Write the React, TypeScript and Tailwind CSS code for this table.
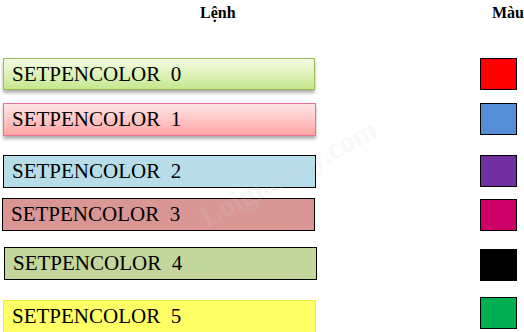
import React from "react";

type Row = {
  label: string;
  box: string;
  swatch: string;
  mt: string;
  swatchMt: string;
};

const rows: Row[] = [
  {
    label: "SETPENCOLOR  0",
    box: "ml-[3px] w-[312px] h-[32px] border border-[#9bbb59] bg-gradient-to-b from-[#f4fce3] to-[#c6e78c] shadow-[0_3px_3px_rgba(0,0,0,0.3)]",
    swatch: "bg-[#ff0000]",
    mt: "mt-[32px]",
    swatchMt: "mt-0",
  },
  {
    label: "SETPENCOLOR  1",
    box: "ml-[3px] w-[313px] h-[33px] border border-[#e8709a] bg-gradient-to-b from-[#ffe6e6] to-[#ffa6a6] shadow-[0_3px_3px_rgba(0,0,0,0.3)]",
    swatch: "bg-[#558ed5]",
    mt: "mt-[13px]",
    swatchMt: "mt-0",
  },
  {
    label: "SETPENCOLOR  2",
    box: "ml-[3px] w-[313px] h-[33px] border border-black bg-[#b7dee8]",
    swatch: "bg-[#7030a0]",
    mt: "mt-[19px]",
    swatchMt: "mt-0",
  },
  {
    label: "SETPENCOLOR  3",
    box: "ml-[2px] w-[313px] h-[33px] border border-black bg-[#d99694]",
    swatch: "bg-[#cc0066]",
    mt: "mt-[10px]",
    swatchMt: "mt-[1px]",
  },
  {
    label: "SETPENCOLOR  4",
    box: "ml-[4px] w-[313px] h-[33px] border border-black bg-[#c3d69b]",
    swatch: "bg-[#000000]",
    mt: "mt-[16px]",
    swatchMt: "mt-[2px]",
  },
  {
    label: "SETPENCOLOR  5",
    box: "ml-[3px] w-[313px] h-[33px] border border-[#f2ea3a] bg-[#ffff66]",
    swatch: "bg-[#00b050] mr-[-2px]",
    mt: "mt-[19px]",
    swatchMt: "mt-[-3px]",
  },
];

export default function App() {
  return (
    <div
      className="relative w-[524px] h-[332px] overflow-hidden bg-white text-black"
      style={{ fontFamily: '"Liberation Serif", "Times New Roman", serif' }}
    >
      {/* header */}
      <div className="flex h-[26px] items-center text-[16px] font-bold leading-none">
        <span className="ml-[200px]">Lệnh</span>
        <span className="ml-auto">Màu</span>
      </div>

      {rows.map((r) => (
        <div key={r.label} className={`flex items-start ${r.mt}`}>
          <div className={`flex items-center whitespace-pre pl-[8px] text-[21px] leading-none ${r.box}`}>
            {r.label}
          </div>
          <div
            className={`ml-auto mr-[7px] h-[32px] w-[37px] border border-black ${r.swatch} ${r.swatchMt}`}
          />
        </div>
      ))}

      {/* faint watermark */}
      <div className="pointer-events-none absolute left-[190px] top-[150px] -rotate-[28deg] text-[30px] font-bold text-gray-300 opacity-15">
        Loigiaihay.com
      </div>
    </div>
  );
}
